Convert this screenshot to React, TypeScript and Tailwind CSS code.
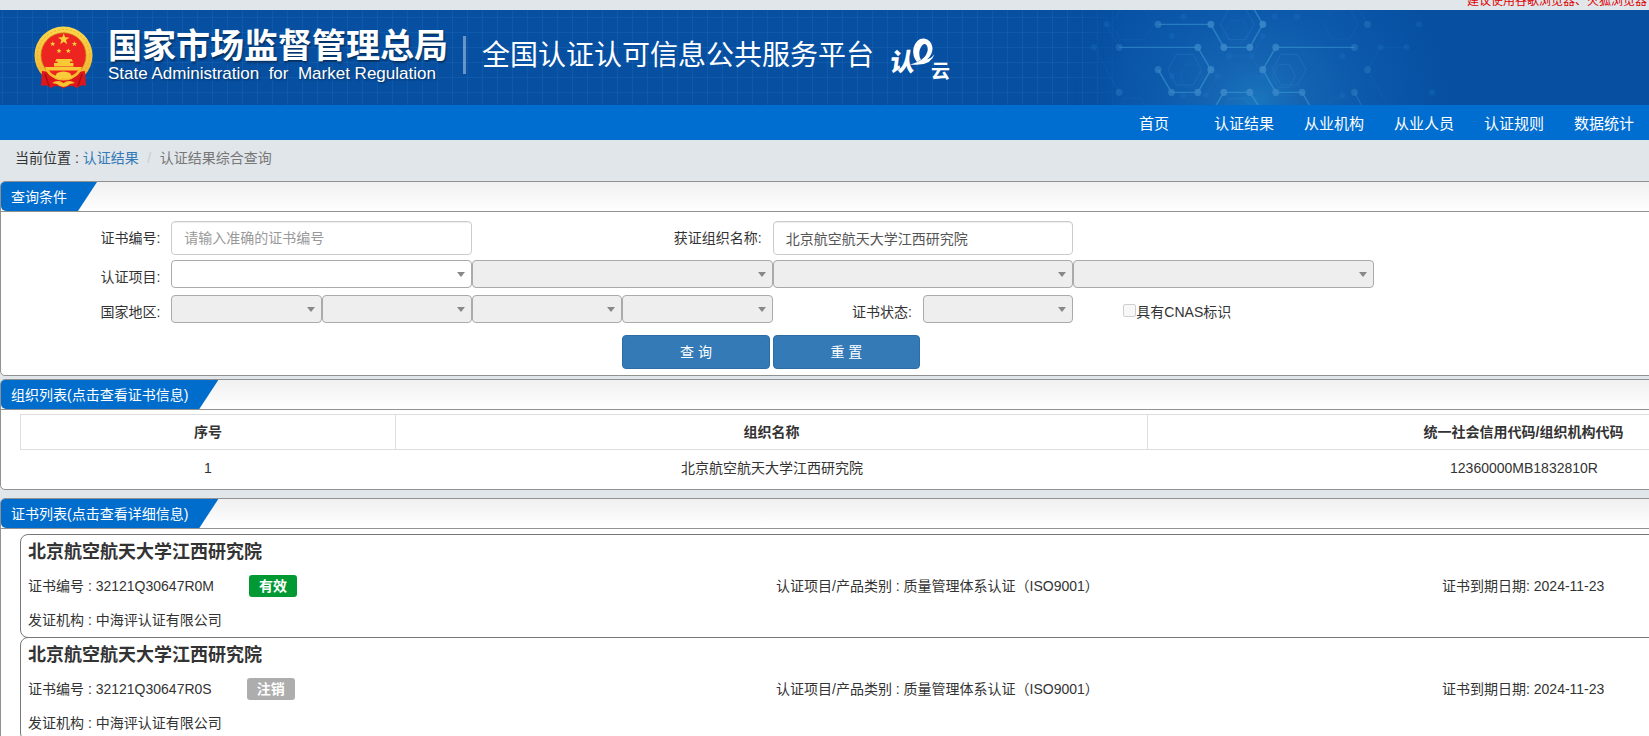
import React from 'react';

const FONT = "font-['Liberation_Sans','Noto_Sans_CJK_SC',sans-serif]";

const navItems = ['首页', '认证结果', '从业机构', '从业人员', '认证规则', '数据统计'];

const certificates = [
  { org: '北京航空航天大学江西研究院', no: '32121Q30647R0M', status: '有效', valid: true },
  { org: '北京航空航天大学江西研究院', no: '32121Q30647R0S', status: '注销', valid: false },
];

function starPoints(cx: number, cy: number, r: number) {
  return Array.from({ length: 10 }, (_, i) => {
    const radius = i % 2 === 0 ? r : r * 0.4;
    const a = (Math.PI / 5) * i - Math.PI / 2;
    return `${(cx + radius * Math.cos(a)).toFixed(2)},${(cy + radius * Math.sin(a)).toFixed(2)}`;
  }).join(' ');
}

function hexPoints(cx: number, cy: number, rx: number, ry: number) {
  return [
    [cx - rx, cy],
    [cx - rx / 2, cy - ry],
    [cx + rx / 2, cy - ry],
    [cx + rx, cy],
    [cx + rx / 2, cy + ry],
    [cx - rx / 2, cy + ry],
  ]
    .map((p) => p.join(','))
    .join(' ');
}

function Emblem() {
  return (
    <svg className="h-16 w-[60px] shrink-0" viewBox="0 0 60 64" role="img" aria-label="国徽">
      <defs>
        <linearGradient id="gold" x1="0" y1="0" x2="0" y2="1">
          <stop offset="0" stopColor="#fbd84e" />
          <stop offset="1" stopColor="#f0b02c" />
        </linearGradient>
      </defs>
      <circle cx="29.5" cy="29.5" r="29" fill="url(#gold)" />
      <circle cx="29.5" cy="29.5" r="26" fill="none" stroke="#e8a626" strokeWidth="0.8" strokeDasharray="2 2" />
      <circle cx="29.5" cy="29.3" r="22.5" fill="#ee2420" stroke="#c98516" strokeWidth="0.8" />
      <polygon points={starPoints(29.7, 13.3, 6)} fill="#f6d13a" />
      <polygon points={starPoints(18.7, 18, 2.8)} fill="#f6d13a" />
      <polygon points={starPoints(40.5, 18, 2.8)} fill="#f6d13a" />
      <polygon points={starPoints(25, 25, 2.8)} fill="#f6d13a" />
      <polygon points={starPoints(34.3, 25, 2.8)} fill="#f6d13a" />
      <path d="M22.5 33 H37.5 L39 35.5 H21 Z M23.5 35.5 H36 V37 H23.5 Z M20 37 H39.5 V40.5 H20 Z M11 41 H48 L46.5 44.5 H12.5 Z" fill="#f8c835" />
      <path d="M8 45 Q17 45 21 53 Q29.5 56 38 53 Q42 45 51 45 L52 60 Q47 58 43 62 Q37 58 29.5 62.500 Q22 58 17 62 Q13 58 7 60 Z" fill="#dc161b" />
      <path d="M11 48 L15 60 M48 48 L44 60" stroke="#a50d12" strokeWidth="1.3" />
      <path d="M13 44 Q18 52.500 29.5 52.500 Q41 52.500 46 44" fill="none" stroke="#f5bd2b" strokeWidth="2.600" />
      <path d="M23 47 Q29.5 44 36 47 L38 51 Q34 54 29.5 52 Q25 54 21 51 Z" fill="#f9cc3c" />
      <path d="M18 57 Q24 53 29.5 57 Q35 53 41 57 L36 58 Q33 61 29.5 61 Q26 61 23 58 Z" fill="#f7c32f" />
    </svg>
  );
}

function CloudLogo() {
  return (
    <svg className="h-12 w-[66px] shrink-0" viewBox="0 0 66 48" role="img" aria-label="认e云">
      <g fill="#fff" fontFamily="'Noto Sans CJK SC', sans-serif" fontWeight="900">
        <text x="1" y="35" fontSize="25" transform="skewX(-8) translate(5 0)">认</text>
        <text x="43" y="42" fontSize="19" fontWeight="700">云</text>
      </g>
      <path
        d="M29 26 Q24 20 25.500 12 Q28.500 2 36 2.500 Q43.500 3.500 44.500 12 Q44.500 19 39 23.500 Q44 22 46.500 18 Q43.500 28 31 28.500 Q27 29 22 28.500 Q31 26.500 36.500 21 Q40.500 16 39.500 11 Q38 6.500 34.500 9 Q30.500 13 31.500 20 Q32 23 33 23.500 Z"
        fill="#fff"
      />
    </svg>
  );
}

const strongPaths = [
  'M283 73 H421 L455 142 H523 L557 73 L530 20',
  'M181 142 H387 L421 209 L387 277 H318 L283 209',
  'M797 142 H591 L557 209 L591 277 H660 L684 325',
  'M430 325 L455 277 H523 L550 325',
];

const dots = [
  [283, 73], [421, 73], [557, 73], [455, 142], [523, 142], [387, 142], [421, 209], [387, 277], [318, 277],
  [283, 209], [591, 142], [557, 209], [591, 277], [660, 277], [455, 277], [523, 277], [181, 142], [797, 142],
  [181, 277], [831, 73], [831, 209], [797, 277],
];
const faintDots = [
  [148, 73], [115, 142], [865, 142], [933, 142], [966, 73],
  [469, 168], [528, 168], [439, 228], [349, 286], [409, 286], [557, 228], [647, 50], [588, 50], [319, 108],
  [319, 228], [349, 50], [557, 108], [765, 168], [765, 286], [1000, 277],
];

function HeaderPattern() {
  return (
    <svg className="absolute inset-0 h-full w-full" aria-hidden="true">
      <defs>
        <pattern id="grid" x="2" y="7" width="15" height="15" patternUnits="userSpaceOnUse">
          <path d="M0.500 0 V15 M0 0.500 H15" stroke="#1763b5" strokeOpacity="0.5" fill="none" />
        </pattern>
        <radialGradient id="glow" gradientUnits="userSpaceOnUse" cx="540" cy="300" r="520">
          <stop offset="0" stopColor="#1a75bd" />
          <stop offset="0.220" stopColor="#1464b2" />
          <stop offset="0.550" stopColor="#0c58ab" />
          <stop offset="1" stopColor="#064fa1" />
        </radialGradient>
        <linearGradient id="fadeMask" gradientUnits="userSpaceOnUse" x1="0" y1="0" x2="200" y2="0">
          <stop offset="0.300" stopColor="#000" />
          <stop offset="1" stopColor="#fff" />
        </linearGradient>
        <mask id="reveal" maskUnits="userSpaceOnUse" x="0" y="30" width="1568" height="285">
          <rect x="0" y="30" width="1568" height="285" fill="url(#fadeMask)" />
        </mask>
      </defs>
      <rect width="100%" height="100%" fill="url(#grid)" />
      <svg x="100%" width="599" height="95" overflow="visible">
        <g transform="translate(-599 0)">
          <svg width="599" height="95" viewBox="0 30 1568 285" preserveAspectRatio="none">
            <rect x="0" y="30" width="1568" height="285" fill="url(#glow)" mask="url(#reveal)" />
            <g fill="none" stroke="#3d8fce" strokeOpacity="0.350" strokeWidth="2">
              <polygon points={hexPoints(490, 73, 44, 46)} />
              <polygon points={hexPoints(353, 209, 44, 46)} />
              <polygon points={hexPoints(626, 209, 44, 46)} />
              <polygon points={hexPoints(490, 340, 44, 44)} />
              <polygon points={hexPoints(612, 228, 30, 34)} />
            </g>
            <g fill="none" stroke="#3d8fce" strokeOpacity="0.160" strokeWidth="2">
              <polygon points={hexPoints(490, 95, 30, 34)} />
              <polygon points={hexPoints(370, 228, 30, 34)} />
              <polygon points={hexPoints(216, 73, 58, 46)} />
              <polygon points={hexPoints(762, 73, 44, 46)} />
              <polygon points={hexPoints(762, 340, 44, 44)} />
              <polygon points={hexPoints(216, 340, 44, 44)} />
              <path d="M115 142 L181 277 M865 142 L831 209 L885 315 M865 142 H933 M831 73 L810 30 M148 73 L181 142 M469 168 H528 L557 108 M409 168 L439 228 L409 286 H349 M528 168 L557 228 L588 286 H647" />
            </g>
            <g fill="none" stroke="#3fa3d8" strokeOpacity="0.500" strokeWidth="4">
              {strongPaths.map((d) => (
                <path key={d} d={d} />
              ))}
            </g>
            {faintDots.map(([x, y]) => (
              <ellipse key={`${x}-${y}`} cx={x} cy={y} rx="8" ry="9" fill="#1c78c8" fillOpacity="0.280" />
            ))}
            {dots.map(([x, y]) => (
              <ellipse
                key={`${x}-${y}`}
                cx={x}
                cy={y}
                rx="9"
                ry="11"
                fill="#3a86c8"
                fillOpacity={Math.max(0.35, 1 - Math.abs(x - 500) / 500)}
              />
            ))}
            <path d="M797 277 L815 315" stroke="#2f83c8" strokeOpacity="0.500" strokeWidth="3" />
          </svg>
        </g>
      </svg>
    </svg>
  );
}

function Panel({ title, children }: { title: string; children: React.ReactNode }) {
  return (
    <section className="overflow-hidden rounded-[5px] border border-[#919191] bg-white">
      <div className="flex h-[30px] border-b border-[#919191] bg-linear-to-b from-[#f0f0f0] to-white">
        <h2 className="rounded-bl-[5px] bg-[#006dcc] pr-[30px] pl-[10px] text-sm leading-[30px] text-white [clip-path:polygon(0_0,100%_0,calc(100%-19px)_100%,0_100%)]">
          {title}
        </h2>
      </div>
      {children}
    </section>
  );
}

function Picker({ id, label, disabled = true, className }: { id: string; label?: string; disabled?: boolean; className: string }) {
  return (
    <div className={`relative ${className}`}>
      <select
        id={id}
        aria-label={label}
        disabled={disabled}
        className="block h-7 w-full appearance-none rounded-[4px] border border-[#aaa] bg-white px-2 text-sm text-[#444] disabled:bg-[#eee]"
      />
      <svg className="pointer-events-none absolute top-3 right-[7px] h-[5px] w-2" viewBox="0 0 8 5" aria-hidden="true">
        <path d="M0 0 H8 L4 5 Z" fill="#888" />
      </svg>
    </div>
  );
}

const fieldLabel = 'pr-[11px] text-right leading-[34px]';
const textBox =
  'h-[34px] w-full rounded-[4px] border border-[#ccc] bg-white px-3 text-sm text-[#555] placeholder:text-[#999] shadow-[inset_0_1px_1px_rgba(0,0,0,0.075)]';
const actionButton =
  'mr-[3px] h-[34px] rounded-[4px] border border-[#2e6da4] bg-[#337ab7] text-sm whitespace-pre text-white';

export default function App() {
  return (
    <div className={`min-h-screen overflow-x-clip bg-[#e1e6ea] text-sm text-[#333] ${FONT}`}>
      <div className="flex h-[10px] items-end justify-end overflow-hidden pr-[2px] pb-[3px] text-xs leading-3 whitespace-nowrap text-[#d00]">
        建议使用谷歌浏览器、火狐浏览器
      </div>

      <header className="relative h-[95px] bg-[#064fa1] text-white">
        <HeaderPattern />
        <div className="relative flex items-start pt-4 pl-[34px]">
          <Emblem />
          <div className="ml-[14px]">
            <div className="text-[34px] leading-[40px] font-bold [text-shadow:1px_2px_2px_rgba(0,0,0,0.4)]">国家市场监督管理总局</div>
            <div className="text-[17px] leading-4 whitespace-pre [text-shadow:1px_1px_2px_rgba(0,0,0,0.4)]">
              State Administration  for  Market Regulation
            </div>
          </div>
          <div className="mt-[10px] ml-[15px] h-[38px] w-[3px] bg-white/40" />
          <h1 className="mt-2 ml-4 text-[28px] leading-[44px] whitespace-nowrap">全国认证认可信息公共服务平台</h1>
          <div className="mt-[10px] ml-[14px]">
            <CloudLogo />
          </div>
        </div>
      </header>

      <nav className="flex h-[35px] justify-end bg-[#006dd0]">
        {navItems.map((item) => (
          <a key={item} href="#" className="w-[90px] text-center text-[15px] leading-[38px] text-white">
            {item}
          </a>
        ))}
      </nav>

      <div className="flex h-[41px] pl-[15px] leading-9 whitespace-pre">
        <span>当前位置 : </span>
        <a href="#" className="text-[#337ab7]">认证结果</a>
        <span className="w-[21px] text-center text-[#ccc]">/</span>
        <span className="text-[#777]">认证结果综合查询</span>
      </div>

      <main className="min-w-[1920px]">
        <Panel title="查询条件">
          <form className="grid grid-cols-12 items-start pt-[9px] pr-[94px] pb-[6px] pl-5" onSubmit={(e) => e.preventDefault()}>
            <label htmlFor="certNo" className={fieldLabel}>证书编号:</label>
            <div className="col-span-2 pb-[5px]">
              <input id="certNo" className={textBox} placeholder="请输入准确的证书编号" />
            </div>
            <label htmlFor="orgName" className={`col-start-5 ${fieldLabel}`}>获证组织名称:</label>
            <div className="col-span-2">
              <input id="orgName" className={textBox} defaultValue="北京航空航天大学江西研究院" />
            </div>

            <label htmlFor="project1" className={`col-start-1 mb-px ${fieldLabel}`}>认证项目:</label>
            <Picker id="project1" disabled={false} className="col-span-2" />
            <Picker id="project2" label="认证项目二级" className="col-span-2" />
            <Picker id="project3" label="认证项目三级" className="col-span-2" />
            <Picker id="project4" label="认证项目四级" className="col-span-2" />

            <label htmlFor="area1" className={`col-start-1 mb-[6px] ${fieldLabel}`}>国家地区:</label>
            <Picker id="area1" className="col-span-1" />
            <Picker id="area2" label="省" className="col-span-1" />
            <Picker id="area3" label="市" className="col-span-1" />
            <Picker id="area4" label="区县" className="col-span-1" />
            <label htmlFor="status" className={fieldLabel}>证书状态:</label>
            <Picker id="status" className="col-span-1" />
            <label htmlFor="cnas" className="col-span-2 flex pl-[50px] leading-[34px]">
              <input
                id="cnas"
                type="checkbox"
                disabled
                className="mt-[9px] size-[13px] appearance-none rounded-[2px] border border-[#d0d0d0] bg-[#f8f8f8]"
              />
              具有CNAS标识
            </label>

            <button type="submit" className={`col-start-5 ${actionButton}`}>查 询</button>
            <button type="reset" className={actionButton}>重 置</button>
          </form>
        </Panel>

        <div className="mt-[3px]">
          <Panel title="组织列表(点击查看证书信息)">
            <div className="px-[19px] py-1">
              <table className="w-full table-fixed border-separate border-spacing-0 text-center">
                <colgroup>
                  <col className="w-1/5" />
                  <col className="w-2/5" />
                  <col className="w-2/5" />
                </colgroup>
                <thead>
                  <tr className="h-9">
                    <th className="border border-[#ddd]">序号</th>
                    <th className="border-y border-r border-[#ddd]">组织名称</th>
                    <th className="border-y border-r border-[#ddd]">统一社会信用代码/组织机构代码</th>
                  </tr>
                </thead>
                <tbody>
                  <tr className="h-[35px]">
                    <td>1</td>
                    <td>北京航空航天大学江西研究院</td>
                    <td>12360000MB1832810R</td>
                  </tr>
                </tbody>
              </table>
            </div>
          </Panel>
        </div>

        <div className="mt-2">
          <Panel title="证书列表(点击查看详细信息)">
            <div className="px-[19px] py-[5px]">
              {certificates.map((c) => (
                <article key={c.no} className="-mb-px rounded-[8px] border border-[#777] px-[7px] leading-[34px]">
                  <h3 className="text-lg leading-[34px] font-bold">{c.org}</h3>
                  <div className="grid grid-cols-[748fr_666fr_450fr]">
                    <div className="flex items-center">
                      <span>证书编号 : {c.no}</span>
                      <span
                        className={`ml-[35px] rounded-[3px] px-[10px] leading-[22px] font-bold text-white ${c.valid ? 'bg-[#009933]' : 'bg-[#adadad]'}`}
                      >
                        {c.status}
                      </span>
                    </div>
                    <div>认证项目/产品类别 : 质量管理体系认证（ISO9001）</div>
                    <div>证书到期日期: 2024-11-23</div>
                  </div>
                  <div>发证机构 : 中海评认证有限公司</div>
                </article>
              ))}
            </div>
          </Panel>
        </div>
      </main>
    </div>
  );
}
